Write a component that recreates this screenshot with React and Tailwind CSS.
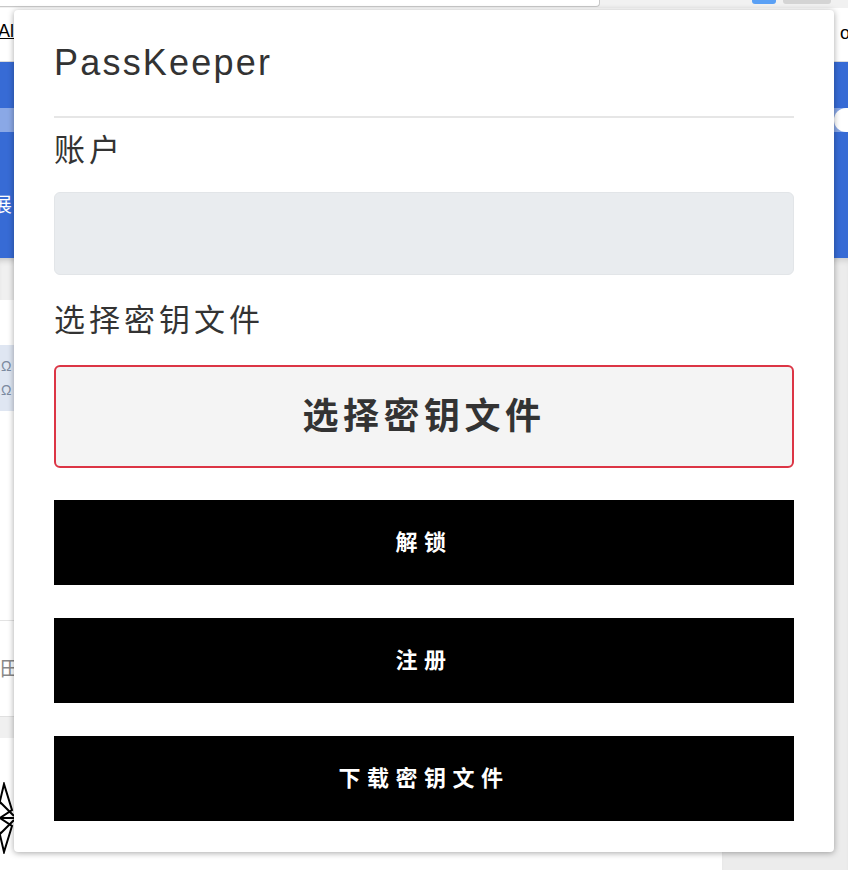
import React from "react";

const cjk = { fontFamily: '"Liberation Sans", "Noto Sans CJK SC", sans-serif' };

const BlackButton = ({ children }) => (
  <button
    type="button"
    className="h-[85px] w-full bg-black text-white text-[22px] font-bold tracking-[6.5px]"
  >
    {children}
  </button>
);

const App = () => {
  return (
    <div className="relative w-[848px] h-[870px] overflow-hidden bg-white" style={cjk}>
      {/* page behind the popup */}
      <div className="flex flex-col w-full h-full">
        <div className="relative h-[8px] bg-[#f1f1f1]">
          <div className="absolute left-0 top-0 w-[600px] h-[7px] bg-white border-b border-r border-[#c8c8c8] rounded-br-[4px]" />
          <div className="absolute left-[752px] top-0 w-[24px] h-[4px] bg-[#5aa0f5] rounded-b-[3px]" />
          <div className="absolute left-[783px] top-0 w-[48px] h-[4px] bg-[#d4d4d4] rounded-b-[3px]" />
        </div>
        <div className="h-[54px] flex justify-between items-center bg-white border-b border-[#dcdcdc]">
          <span className="text-[18px] underline text-black -ml-[2px] -mt-[6px]">Al</span>
          <span className="text-[18px] text-black mr-[-2px] -mt-[2px]">o</span>
        </div>
        <div className="h-[196px] bg-[#376bd5] flex flex-col">
          <div className="h-[46px]" />
          <div className="h-[24px] bg-[#8aa8e6] flex justify-end">
            <div className="w-[14px] h-[24px] rounded-l-full bg-white" />
          </div>
          <div className="flex-1 flex items-center">
            <span className="text-[20px] text-white -ml-[8px] mt-[20px]">展</span>
          </div>
        </div>
        <div className="flex flex-1">
          <div className="w-[722px] flex flex-col">
            <div className="h-[42px] bg-[#f0f0f0] shadow-[inset_0_6px_6px_-4px_rgba(0,0,0,0.2)]" />
            <div className="h-[45px] bg-white" />
            <div className="h-[66px] bg-[#dfe6f2] flex flex-col justify-center gap-[10px] pl-[1px]">
              <span className="text-[14px] leading-[14px] text-[#7c8aa0]">Ω</span>
              <span className="text-[14px] leading-[14px] text-[#7c8aa0]">Ω</span>
            </div>
            <div className="h-[210px] bg-white border-b border-[#e3e3e3]" />
            <div className="h-[95px] bg-white flex items-center">
              <span className="text-[20px] text-[#888]">田</span>
            </div>
            <div className="h-[22px] bg-[#f0f0f0] border-t border-[#e0e0e0]" />
            <div className="flex-1 bg-white relative">
              <svg className="absolute left-[-6px] top-[44px]" width="22" height="72" viewBox="0 0 22 72" fill="none" stroke="#000" strokeWidth="2">
                <path d="M10 2 L18 28 L6 36 L18 44 L10 70 L2 36 Z M2 36 L20 36 M6 20 L20 34 M6 52 L20 38" />
              </svg>
            </div>
          </div>
          <div className="flex-1 bg-[#ececec] shadow-[inset_0_6px_6px_-4px_rgba(0,0,0,0.15)]" />
        </div>
      </div>

      {/* extension popup */}
      <div className="absolute left-[14px] top-[10px] w-[820px] h-[842px] bg-white rounded-[4px] shadow-[0_1px_6px_rgba(0,0,0,0.35)] px-[40px] pt-[33px] flex flex-col">
        <h1
          className="text-[36px] leading-[40px] tracking-[2.2px] text-[#333]"
          style={{ fontFamily: '"Liberation Sans", Arial, sans-serif' }}
        >
          PassKeeper
        </h1>
        <div className="mt-[33px] h-[2px] bg-[#e6e6e6]" />

        <label className="mt-[14px] text-[31px] leading-[38px] tracking-[4px] text-[#333]">账户</label>
        <div className="mt-[22px] h-[83px] rounded-[6px] bg-[#e9ecef] border border-[#e2e5e8]" />

        <label className="mt-[27px] text-[31px] leading-[38px] tracking-[4px] text-[#333]">选择密钥文件</label>
        <button
          type="button"
          className="mt-[25px] h-[103px] w-full rounded-[6px] border-2 border-[#dc3545] bg-[#f4f4f4] text-[36px] font-bold tracking-[4.5px] text-[#333]"
        >
          选择密钥文件
        </button>

        <div className="mt-[32px] flex flex-col gap-[33px]">
          <BlackButton>解锁</BlackButton>
          <BlackButton>注册</BlackButton>
          <BlackButton>下载密钥文件</BlackButton>
        </div>
      </div>
    </div>
  );
};

export default App;
